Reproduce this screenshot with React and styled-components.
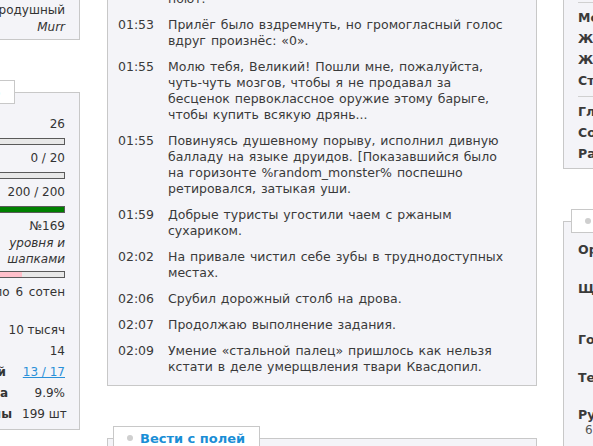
import React from 'react';
import styled, { createGlobalStyle } from 'styled-components';

const GlobalStyle = createGlobalStyle`
  *, *::before, *::after { box-sizing: border-box; }
  html, body {
    margin: 0;
    padding: 0;
    background: #fff;
    overflow: hidden;
  }
  body {
    font-family: "DejaVu Sans", Verdana, sans-serif;
    font-size: 12px;
    color: #333;
  }
`;

// --- data ---
const diary = [
  { time: '01:50', text: 'Говорят, по ночам на здешних болотах и русалки поют.' },
  { time: '01:53', text: 'Прилёг было вздремнуть, но громогласный голос вдруг произнёс: «0».' },
  { time: '01:55', text: 'Молю тебя, Великий! Пошли мне, пожалуйста, чуть\u2011чуть мозгов, чтобы я не продавал за бесценок первоклассное оружие этому барыге, чтобы купить всякую дрянь...' },
  { time: '01:55', text: 'Повинуясь душевному порыву, исполнил дивную балладу на языке друидов. [Показавшийся было на горизонте %random_monster% поспешно ретировался, затыкая уши.' },
  { time: '01:59', text: 'Добрые туристы угостили чаем с ржаным сухариком.' },
  { time: '02:02', text: 'На привале чистил себе зубы в труднодоступных местах.' },
  { time: '02:06', text: 'Срубил дорожный столб на дрова.' },
  { time: '02:07', text: 'Продолжаю выполнение задания.' },
  { time: '02:09', text: 'Умение «стальной палец» пришлось как нельзя кстати в деле умерщвления твари Квасдопил.' },
];

const menuTop = ['Мой герой', 'Жалобная книга', 'Жизнь гильдий', 'Статистика'];
const menuBottom = ['Главная', 'Сообщество', 'Рассылка'];

const equipment = [
  { label: 'Оружие', value: 'меч-кладенец', h: 39 },
  { label: 'Щит', value: 'крышка от кастрюли', h: 51 },
  { label: 'Голова', value: 'шапка-невидимка', h: 38 },
  { label: 'Тело', value: 'кольчуга', h: 37 },
];

export default function App() {
  return (
    <>
      <GlobalStyle />
      <Page>
        <Column $w={241}>
          <Panel $top={38} $bottom={3}>
            <StatRow>
              <Label>Характер</Label>
              <Value>добродушный</Value>
            </StatRow>
            <StatRow>
              <Label>Бог</Label>
              <Value $italic>Murr</Value>
            </StatRow>
          </Panel>

          <Block>
            <Tab><Dot /><TabTitle>Сводка по герою</TabTitle></Tab>
            <Panel $top={23} $bottom={4}>
              <StatRow>
                <Label>Уровень</Label>
                <Value>26</Value>
              </StatRow>
              <Bar><Fill $color="#e8e8e8" style={{ width: '100%' }} /></Bar>
              <StatRow>
                <Label>Инвентарь</Label>
                <Value>0 / 20</Value>
              </StatRow>
              <Bar><Fill $color="#e8e8e8" style={{ width: '100%' }} /></Bar>
              <StatRow>
                <Label>Здоровье</Label>
                <Value>200 / 200</Value>
              </StatRow>
              <Bar><Fill $color="#008000" style={{ width: '100%' }} /></Bar>
              <StatRow>
                <Label>Задание</Label>
                <Value>№169</Value>
              </StatRow>
              <Quest>уровня и шапками</Quest>
              <Bar $tight><Fill $color="#ffc0cb" style={{ width: '80%' }} /></Bar>
              <StatRow>
                <Label>Золотых</Label>
                <Value $wide>около 6 сотен</Value>
              </StatRow>

              <List>
                <StatRow $lh={21}>
                  <Label>Столбов</Label>
                  <Value>10 тысяч</Value>
                </StatRow>
                <StatRow $lh={21}>
                  <Label>Смертей</Label>
                  <Value>14</Value>
                </StatRow>
                <StatRow $lh={21}>
                  <Label $w={152}>Побед / поражений</Label>
                  <Value><Link href="#">13 / 17</Link></Value>
                </StatRow>
                <StatRow $lh={21}>
                  <Label $w={154}>Кирпичей для храма</Label>
                  <Value>9.9%</Value>
                </StatRow>
                <StatRow $lh={21}>
                  <Label $w={158}>Запасы древесины</Label>
                  <Value>199 шт</Value>
                </StatRow>
              </List>
            </Panel>
          </Block>
        </Column>

        <Column $w={430} $ml={27} $mr={26}>
          <Panel $top={11} $bottom={10} $left={10} $right={19}>
            <Diary>
              {diary.map((d, i) => (
                <Entry key={i}>
                  <Time>{d.time}</Time>
                  <Msg>{d.text}</Msg>
                </Entry>
              ))}
            </Diary>
          </Panel>

          <Block>
            <Tab><Dot /><TabTitle>Вести с полей</TabTitle></Tab>
            <Panel $top={23} $bottom={10}>
              <Msg>Новости</Msg>
            </Panel>
          </Block>
        </Column>

        <Column $w={240}>
          <Panel $top={33} $bottom={4}>
            <Rule />
            {menuTop.map(m => <MenuItem key={m}>{m}</MenuItem>)}
            <Rule />
            {menuBottom.map(m => <MenuItem key={m}>{m}</MenuItem>)}
          </Panel>

          <Block>
            <Tab $offset={8}><Dot /><TabTitle>Снаряжение</TabTitle></Tab>
            <Panel $top={19} $bottom={10}>
              {equipment.map(e => (
                <EquipRow key={e.label} $h={e.h}>
                  <EquipLabel>{e.label}</EquipLabel>
                  <EquipValue>{e.value}</EquipValue>
                </EquipRow>
              ))}
              <EquipRow>
                <EquipLabel>Руки</EquipLabel>
                <EquipValue>перчатки</EquipValue>
              </EquipRow>
              <Note>6.</Note>
            </Panel>
          </Block>
        </Column>
      </Page>
    </>
  );
}

// styled-components
const Page = styled.div`
  display: flex;
  align-items: flex-start;
  margin-top: -37px;
  margin-left: -161px;
`;

const Column = styled.div`
  flex: none;
  width: ${p => p.$w}px;
  margin-left: ${p => p.$ml || 0}px;
  margin-right: ${p => p.$mr || 0}px;
  display: flex;
  flex-direction: column;
`;

const Block = styled.div`
  margin-top: 40px;
  display: flex;
  flex-direction: column;
`;

const Panel = styled.div`
  background: #f4f4f8;
  border: 1px solid #c8c8c8;
  padding: ${p => p.$top}px ${p => p.$right ?? 14}px ${p => p.$bottom}px ${p => p.$left ?? 14}px;
`;

const Tab = styled.div`
  position: relative;
  z-index: 1;
  align-self: flex-start;
  height: 24px;
  margin-left: ${p => p.$offset ?? 6}px;
  margin-bottom: -12px;
  padding: 0 14px 0 13px;
  display: flex;
  align-items: center;
  gap: 7px;
  background: #fff;
  border: 1px solid #c8c8c8;
`;

const Dot = styled.span`
  width: 6px;
  height: 6px;
  border-radius: 50%;
  background: #cfcfcf;
`;

const TabTitle = styled.span`
  font-size: 13px;
  font-weight: bold;
  color: #1a8ed6;
  white-space: nowrap;
`;

const StatRow = styled.div`
  display: flex;
  justify-content: space-between;
  align-items: baseline;
  gap: 10px;
  line-height: ${p => p.$lh || 17}px;
  font-size: 12px;
`;

const Label = styled.span`
  flex: none;
  font-weight: bold;
  color: #333;
  white-space: nowrap;
  ${p => p.$w && `width: ${p.$w}px; text-align: right;`}
`;

const Value = styled.span`
  color: #333;
  white-space: nowrap;
  text-align: right;
  word-spacing: ${p => (p.$wide ? '2px' : 'normal')};
  font-style: ${p => (p.$italic ? 'italic' : 'normal')};
`;

const Quest = styled.div`
  align-self: flex-end;
  margin-left: auto;
  width: 64px;
  text-align: right;
  font-style: italic;
  line-height: 16px;
  color: #333;
`;

const Bar = styled.div`
  height: 7px;
  margin: ${p => (p.$tight ? '4px 0 6px' : '5px 0')};
  border: 1px solid #5a5a5a;
  background: #e8e8e8;
  display: flex;
`;

const Fill = styled.div`
  height: 100%;
  background: ${p => p.$color};
`;

const List = styled.div`
  margin-top: 19px;
  display: flex;
  flex-direction: column;
`;

const Link = styled.a`
  color: #2a90d8;
  text-decoration: underline;
`;

const Diary = styled.div`
  display: flex;
  flex-direction: column;
  gap: 10px;
`;

const Entry = styled.div`
  display: grid;
  grid-template-columns: 50px 1fr;
  font-size: 12.5px;
  line-height: 16px;
  word-spacing: 1px;
  color: #3a3a3a;
`;

const Time = styled.span`
  word-spacing: 0;
`;

const Msg = styled.span``;

const Rule = styled.div`
  height: 1px;
  background: #d0d0d0;
  margin: 5px 0 4px;
`;

const MenuItem = styled.div`
  font-weight: bold;
  font-size: 12.5px;
  line-height: 21px;
  color: #3a3a3a;
`;

const EquipRow = styled.div`
  display: flex;
  gap: 40px;
  min-height: ${p => p.$h || 17}px;
  line-height: 17px;
`;

const EquipLabel = styled.span`
  font-weight: bold;
  font-size: 12.5px;
  color: #3a3a3a;
`;

const EquipValue = styled.span`
  color: #333;
`;

const Note = styled.div`
  padding-left: 7px;
  line-height: 14px;
  color: #555;
`;
